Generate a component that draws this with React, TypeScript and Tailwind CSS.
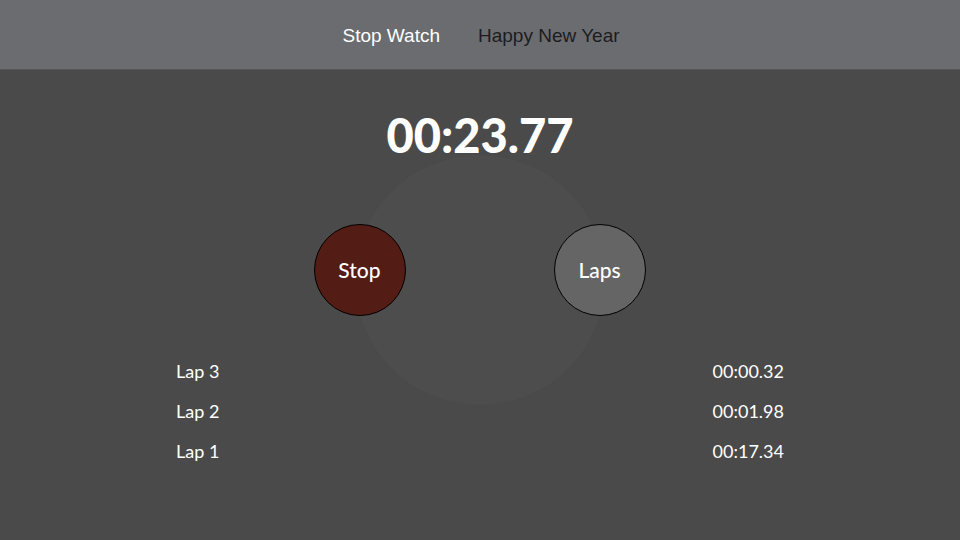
import React from "react";

const laps = [
  { name: "Lap 3", time: "00:00.32" },
  { name: "Lap 2", time: "00:01.98" },
  { name: "Lap 1", time: "00:17.34" },
];

const App: React.FC = () => {
  return (
    <div className="flex h-[540px] w-[960px] flex-col overflow-hidden bg-[#4e4e4e]">
      {/* Top tabs */}
      <header className="flex h-[70px] shrink-0 items-center justify-center gap-[38px] border-b border-[#555] bg-[#6b6c70] pl-[2px] pt-[3px] font-['Liberation_Sans',sans-serif] text-[19px]">
        <span className="text-white">Stop Watch</span>
        <span className="text-[#1c1c1f]">Happy New Year</span>
      </header>

      <main className="relative flex-1 overflow-hidden">
        {/* Background glow shapes */}
        <div className="pointer-events-none absolute left-[-299px] top-[-191px] h-[1558px] w-[1558px] rounded-full bg-[#4a4a4a]" />
        <div className="pointer-events-none absolute left-[355px] top-[85px] h-[250px] w-[250px] rounded-full bg-[#4d4d4d]" />

        <div className="relative flex flex-col items-center">
          <div className="mt-[39px] font-['Lato',sans-serif] text-[47px] font-black leading-[52px] text-white">
            00:23.77
          </div>

          <div className="mt-[63px] flex gap-[148px] pr-[1px]">
            <button className="flex h-[92px] w-[92px] items-center justify-center rounded-full border-[1.5px] border-black bg-[#531c15] font-['Lato',sans-serif] text-[21px] font-medium text-white">
              Stop
            </button>
            <button className="flex h-[92px] w-[92px] items-center justify-center rounded-full border-[1.5px] border-black bg-[#656565] font-['Lato',sans-serif] text-[21px] font-medium text-white">
              Laps
            </button>
          </div>

          <ul className="mt-[35px] flex w-[608px] flex-col font-['Lato',sans-serif] text-[18px] text-white">
            {laps.map((lap) => (
              <li key={lap.name} className="flex h-[40px] items-center justify-between">
                <span>{lap.name}</span>
                <span>{lap.time}</span>
              </li>
            ))}
          </ul>
        </div>
      </main>
    </div>
  );
};

export default App;
